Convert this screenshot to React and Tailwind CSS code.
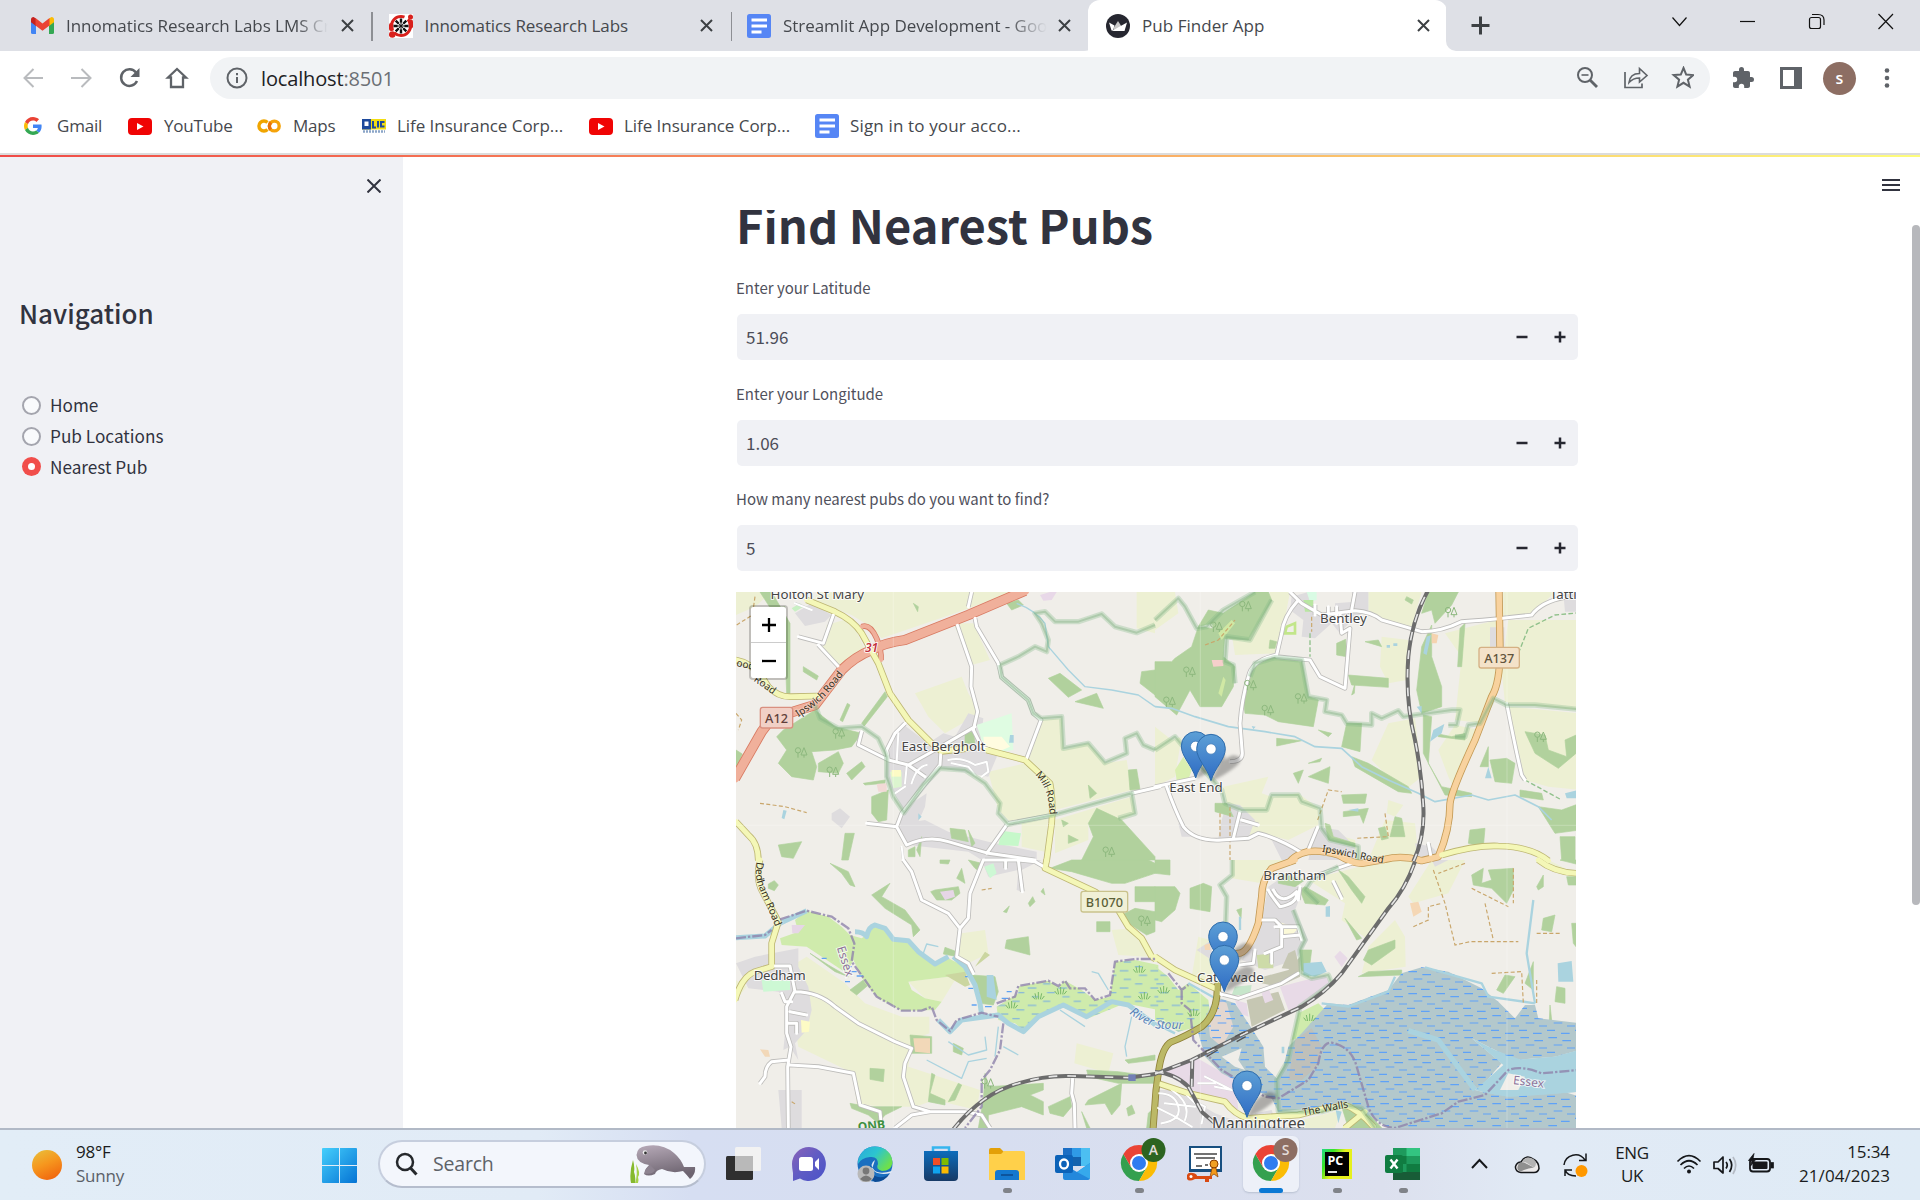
import React from "react";

const UI = "font-['Open_Sans','Noto_Sans',sans-serif]";
const SRC = "font-['Noto_Sans_CJK_SC','Noto_Sans',sans-serif]";

/* ---------- favicons ---------- */
const GmailIcon = () => (
  <svg className="h-[17px] w-[23px]" viewBox="0 0 23 17">
    <path d="M0 2.5V15.5Q0 17 1.5 17H5V6Z" fill="#4285f4" />
    <path d="M23 2.5V15.5Q23 17 21.500 17H18V6Z" fill="#34a853" />
    <path d="M0 2.500Q0 0 2.500 0L5 1.500V9L0 5.200Z" fill="#c5221f" />
    <path d="M23 2.500Q23 0 20.500 0L18 1.500V9L23 5.200Z" fill="#fbbc04" />
    <path d="M4.500 1L11.500 6.500L18.500 1V8.500L11.500 13.800L4.500 8.500Z" fill="#ea4335" />
  </svg>
);
const WheelIcon = () => (
  <svg className="h-6 w-6" viewBox="0 0 24 24">
    <rect width="24" height="24" fill="#fff" />
    <circle cx="12" cy="12" r="9.500" fill="none" stroke="#d8201c" strokeWidth="3" strokeDasharray="22 4" />
    <circle cx="3.200" cy="20.500" r="3.300" fill="#d8201c" />
    <circle cx="21.500" cy="3" r="2.500" fill="#d8201c" />
    <rect x="19" y="5.500" width="5" height="9" rx="2" fill="#d8201c" />
    <rect x="0" y="9" width="5" height="8" rx="2" fill="#d8201c" />
    <circle cx="12" cy="12" r="7.800" fill="#fff" />
    {[0, 45, 90, 135].map((a) => (
      <path key={a} d="M12 4.500V19.500" stroke="#111" strokeWidth="2.400" strokeDasharray="4 7" transform={`rotate(${a} 12 12)`} />
    ))}
    {[0, 45, 90, 135].map((a) => (
      <path key={a} d="M12 6V18" stroke="#111" strokeWidth="1" transform={`rotate(${a} 12 12)`} />
    ))}
  </svg>
);
const DocIcon = () => (
  <svg className="h-6 w-6" viewBox="0 0 24 24">
    <rect width="24" height="24" rx="2.500" fill="#5686f5" />
    <path d="M4.500 6H20M4.500 12H20M4.500 18H14.500" stroke="#fff" strokeWidth="2.800" />
  </svg>
);
const CrownIcon = () => (
  <svg className="h-6 w-6" viewBox="0 0 24 24">
    <circle cx="12" cy="12" r="12" fill="#262730" />
    <path d="M3 8.500L8.500 11.500L7 16.500H5.500Z" fill="#fff" />
    <path d="M12 7L7.500 14V17H16.500V14Z" fill="#c9c9c9" />
    <path d="M21 8.500L12 13.500L6 17H18.500Z" fill="#fff" />
  </svg>
);
const GoogleIcon = () => (
  <svg className="h-[18px] w-[18px]" viewBox="0 0 48 48">
    <path fill="#EA4335" d="M24 9.500c3.540 0 6.710 1.220 9.210 3.600l6.850-6.850C35.900 2.380 30.470 0 24 0 14.620 0 6.510 5.380 2.560 13.220l7.980 6.190C12.430 13.720 17.740 9.500 24 9.500z" />
    <path fill="#4285F4" d="M46.980 24.550c0-1.570-.15-3.090-.38-4.550H24v9.020h12.940c-.58 2.960-2.260 5.480-4.780 7.180l7.730 6c4.510-4.180 7.090-10.360 7.090-17.650z" />
    <path fill="#FBBC05" d="M10.530 28.590c-.48-1.450-.76-2.990-.76-4.590s.27-3.140.76-4.590l-7.980-6.190C.92 16.460 0 20.120 0 24c0 3.880.92 7.540 2.560 10.780l7.970-6.190z" />
    <path fill="#34A853" d="M24 48c6.480 0 11.930-2.130 15.890-5.810l-7.730-6c-2.150 1.450-4.920 2.300-8.160 2.300-6.260 0-11.570-4.220-13.470-9.910l-7.980 6.190C6.510 42.620 14.620 48 24 48z" />
  </svg>
);
const YouTubeIcon = () => (
  <svg className="h-[17px] w-6" viewBox="0 0 24 17">
    <rect width="24" height="17" rx="4" fill="#f00404" />
    <path d="M9 5L15.500 8.500L9 12Z" fill="#fff" />
  </svg>
);
const ColabIcon = () => (
  <svg className="h-[14px] w-6" viewBox="0 0 24 14">
    <path d="M10.500 3.500A5 5 0 1 0 10.500 10.500" fill="none" stroke="#f0a500" strokeWidth="3.400" />
    <circle cx="17.300" cy="7" r="4.900" fill="none" stroke="#f5a30a" strokeWidth="3.400" />
    <path d="M13.800 10.500A5 5 0 0 1 13.800 3.500" fill="none" stroke="#e8710a" strokeWidth="3.400" />
  </svg>
);
const LicIcon = () => (
  <svg className="h-[15px] w-6" viewBox="0 0 24 15">
    <rect width="24" height="10.500" fill="#f2dd12" />
    <rect width="9" height="10.500" fill="#1e4a9c" />
    <path d="M2.500 2.500H6.500V7H2.500Z" fill="#fff" />
    <path d="M11 2V8.500H14M16 2V8.500M22.500 3H19V7.500H22.500" fill="none" stroke="#1e4a9c" strokeWidth="2" />
    <path d="M1 12.500H23" stroke="#8ba5c8" strokeWidth="2.500" strokeDasharray="2 1" />
  </svg>
);
const CloseX = () => (
  <svg className="h-[13px] w-[13px] shrink-0" viewBox="0 0 13 13">
    <path d="M1 1L12 12M12 1L1 12" stroke="#3c4043" strokeWidth="2" />
  </svg>
);

/* ---------- browser ---------- */
function TabStrip() {
  return (
    <div className="flex h-[51px] bg-[#dee0e6] text-[17px] text-[#45484d]">
      <div className="flex w-[371px] items-center pl-[31px]">
        <GmailIcon />
        <div className="ml-3 w-[262px] overflow-hidden whitespace-nowrap tracking-[-0.05px] [mask-image:linear-gradient(90deg,#000_88%,transparent)]">Innomatics Research Labs LMS Cr</div>
        <div className="ml-[13px]"><CloseX /></div>
      </div>
      <div className="mt-3 h-[29px] w-[1.500px] bg-[#8d8f94]" />
      <div className="flex w-[358px] items-center pl-[16px]">
        <WheelIcon />
        <div className="ml-3 w-[275px] whitespace-nowrap tracking-[-0.100px]">Innomatics Research Labs</div>
        <CloseX />
      </div>
      <div className="mt-3 h-[29px] w-[1.500px] bg-[#8d8f94]" />
      <div className="flex w-[348px] items-center pl-[15px]">
        <DocIcon />
        <div className="ml-3 w-[264px] overflow-hidden whitespace-nowrap tracking-[-0.050px] [mask-image:linear-gradient(90deg,#000_85%,transparent)]">Streamlit App Development - Goo</div>
        <div className="ml-[11px]"><CloseX /></div>
      </div>
      <div className="flex">
        <div className="h-[51px] w-[16px] bg-white"><div className="h-full w-[16px] rounded-br-[12px] bg-[#dee0e6]" /></div>
        <div className="-ml-[8px] flex w-[359px] items-center rounded-t-[12px] bg-white pl-[18px]">
          <CrownIcon />
          <div className="ml-3 w-[275px] whitespace-nowrap tracking-[0.050px]">Pub Finder App</div>
          <CloseX />
        </div>
        <div className="-ml-px h-[51px] w-[10px] bg-white"><div className="h-full w-[10px] rounded-bl-[12px] bg-[#dee0e6]" /></div>
      </div>
      <svg className="ml-[15px] mt-4 h-[19px] w-[19px]" viewBox="0 0 19 19"><path d="M9.500 0.500V18.500M0.500 9.500H18.500" stroke="#3c4043" strokeWidth="3" /></svg>
      <svg className="ml-auto mt-[13px] h-[17px] w-[222px]" viewBox="0 0 222 17" fill="none" stroke="#111" strokeWidth="1.200">
        <path d="M0.500 4.500L7.500 12.500L14.500 4.500" />
        <path d="M68 8.500H83" />
        <path d="M140 1.500H146Q152 1.500 152 7V12" />
        <rect x="137.500" y="4.500" width="11" height="11" rx="2" />
        <path d="M206.500 1L221 16M221 1L206.500 16" />
      </svg>
      <div className="w-[26px] shrink-0" />
    </div>
  );
}

function Toolbar() {
  return (
    <div className="flex h-[54px] items-center bg-white">
      <svg className="ml-[23px] h-6 w-[166px]" viewBox="0 0 166 24" fill="none" strokeWidth="2">
        <path d="M20 12H2M10.500 3L1.500 12L10.500 21" stroke="#b9bbbe" />
        <path d="M48 12H67M58.500 3L67.500 12L58.500 21" stroke="#b9bbbe" />
        <path d="M113 6.500A8.300 8.300 0 1 0 114 15" stroke="#5f6368" strokeWidth="2.500" />
        <path d="M116.500 2V11H107.500Z" fill="#5f6368" />
        <path d="M145 11.500L154 3L163 11.500H160V21H148V11.500Z" stroke="#5f6368" strokeWidth="2.300" />
      </svg>
      <div className="ml-[21px] flex h-[42px] w-[1500px] items-center rounded-full bg-[#f1f3f5] pl-4">
        <svg className="h-[22px] w-[22px]" viewBox="0 0 22 22" fill="none" stroke="#5f6368" strokeWidth="2"><circle cx="11" cy="11" r="9.500" /><path d="M11 10V16M11 6V8.200" /></svg>
        <div className="ml-[13px] whitespace-nowrap pt-px text-[20px] tracking-[-0.150px] text-[#202124]">localhost<span className="text-[#6b6f74]">:8501</span></div>
        <svg className="ml-auto mr-[16px] h-6 w-[118px]" viewBox="0 0 118 24" fill="none" stroke="#5f6368" strokeWidth="2">
          <circle cx="9" cy="9" r="7" /><path d="M14 14L21 21" strokeWidth="2.800" /><path d="M5.500 9H12.500" strokeWidth="1.600" />
          <path d="M49 6V21.500H66V17.500" strokeWidth="1.700" /><path d="M53 16.500Q54 7.500 63.500 7.500V2.500L71 9.500L63.500 16V12Q57 12 53 16.500Z" strokeWidth="1.600" />
          <path d="M107.500 2.500L110.200 9.100L117.300 9.600L111.900 14.200L113.600 21.100L107.500 17.300L101.400 21.100L103.100 14.200L97.700 9.600L104.800 9.100Z" transform="translate(0 -0.500)" />
        </svg>
      </div>
      <svg className="ml-[21px] h-6 w-6" viewBox="0 0 24 24"><path fill="#5f6368" d="M20.500 11H19V7c0-1.100-.9-2-2-2h-4V3.500a2.500 2.500 0 0 0-5 0V5H4c-1.100 0-2 .9-2 2v3.800h1.500a2.700 2.700 0 0 1 0 5.400H2V20c0 1.100.9 2 2 2h3.800v-1.500a2.700 2.700 0 0 1 5.400 0V22H17c1.100 0 2-.9 2-2v-4h1.500a2.500 2.500 0 0 0 0-5z" /></svg>
      <svg className="ml-[25px] h-[22px] w-[22px]" viewBox="0 0 22 22"><rect x="1.500" y="1.500" width="19" height="19" fill="#fff" stroke="#5f6368" strokeWidth="3" /><rect x="14" y="1" width="7" height="20" fill="#5f6368" /></svg>
      <div className="ml-[21px] flex h-[33px] w-[33px] items-center justify-center rounded-full bg-[#8d6e63] text-[16px] font-semibold text-white">s</div>
      <svg className="ml-[28px] h-5 w-[6px]" viewBox="0 0 6 20" fill="#5f6368"><circle cx="3" cy="2.500" r="2.300" /><circle cx="3" cy="10" r="2.300" /><circle cx="3" cy="17.500" r="2.300" /></svg>
    </div>
  );
}

function Bookmarks() {
  return (
    <div className="flex h-[50px] shrink-0 items-center whitespace-nowrap border-b-2 border-[#dcdcdc] bg-white pb-[6px] pl-6 text-[17px] tracking-[-0.200px] text-[#45484d]">
      <GoogleIcon /><div className="ml-[15px] w-[71px]">Gmail</div>
      <YouTubeIcon /><div className="ml-[12px] w-[93px]">YouTube</div>
      <ColabIcon /><div className="ml-[12px] w-[69px]">Maps</div>
      <LicIcon /><div className="ml-[11px] w-[192px] tracking-[-0.050px]">Life Insurance Corp...</div>
      <YouTubeIcon /><div className="ml-[11px] w-[191px] tracking-[-0.050px]">Life Insurance Corp...</div>
      <DocIcon /><div className="ml-[11px] tracking-[0.150px]">Sign in to your acco...</div>
    </div>
  );
}

/* ---------- map data, in thirds of a pixel per quarter sheet ---------- */
const ORIGIN = { a: "translate(0 0)", b: "translate(1260 0)", c: "translate(0 810)", d: "translate(1260 810)" };

const FARM = [
  ["a", "M250 6H835L660 70L440 145L390 100L350 75L235 30Z M275 105L345 85L400 200L320 230L262 180Z M540 310L680 260L700 310L735 370L630 430L580 380Z M655 100L715 100L765 210L710 225Z M1205 6H1260V130L1205 115Z M3 6H110L60 50L3 75Z"],
  ["a", "M915 390L980 385L985 480L1060 460L1110 520L1175 510L1190 600L960 660L950 580L875 505Z M760 545L870 520L945 600L945 680L830 700L790 660Z M860 700L940 685L930 785L860 770Z M960 690L1090 650L1190 620L1200 670L1160 690L1060 700L1060 750L960 790Z"],
  ["b", "M0 6H60L70 70L0 120Z M345 6H405L370 190L240 195L225 100L320 70Z M640 6H800L770 110L680 90L640 60Z M680 140L760 150L755 270L700 280L675 230Z M1060 90H1275V360L1050 340L1040 240Z M1045 6H1200L1130 75L1045 85Z M870 130L1025 90L1020 310L985 400L900 390L920 200Z M0 410L50 450L80 440L60 560L0 590Z M205 590L340 560L320 610L350 620L430 610L490 655V705L400 750L300 725L215 640Z M700 400L780 385L800 560L750 600L700 560L650 510Z M700 630L745 645L720 680L695 670Z M900 405L975 420L900 600L880 560L850 480Z M1060 350L1275 370V600L1180 590L1110 570Z M230 700L310 710L290 750L230 745Z M640 810L690 690L780 700L790 800Z M500 720L600 750L610 810H480Z"],
  ["c", "M150 330L215 290L330 370L390 430L500 470L583 470L583 520L530 540L520 620L735 690L725 750L600 720L540 740H480L365 735L355 640L190 560Z M680 220L750 210L760 280L700 310L670 290Z M1130 210L1200 205L1235 240L1235 290L1150 285Z M1025 550L1135 580L1120 640L1018 610Z M3 360L35 380L3 420Z M520 365L640 350L660 360L620 425L570 415Z"],
  ["d", "M230 0H420L330 40L320 70L230 55Z M460 60L690 0H780L730 100L640 240L560 180L570 130Z M720 180L750 230L752 320L620 340L640 260Z M830 0H930L880 100L775 130L760 110Z M130 230L165 240L175 370L110 350Z M970 0H1160L1260 60V40L1180 0Z M440 780L560 750L540 804H440Z"],
];
const URBAN = [
  ["a", "M500 400L580 460L625 430L660 440L700 370L745 385L735 470L790 490L760 560L620 535L510 670L450 560L455 500Z M510 700L570 690L640 725L760 755L905 785V810H740L700 785L520 765L490 710Z M500 660L575 610L570 650L530 740L490 700Z M180 70L230 40L290 75L270 95L210 108Z M290 670L315 655L345 680L320 715L290 690Z"],
  ["b", "M410 20L460 6L480 60L540 80V40L600 35L590 6H640V60L590 90L555 130L530 100L480 145L440 140L445 90L405 60Z M1005 112L1048 112V170H1005Z M1225 10H1275V65H1230Z M215 640L255 645L300 690L280 745H190L200 690Z M70 700L120 740H80Z M485 710L550 720L600 770V810H460Z M350 750L420 775L430 810H380Z M780 760L830 770L860 800L790 800Z"],
  ["c", "M3 310L60 290L190 265V320L220 380L230 450L215 510L180 550L190 600L165 560L145 570L160 420L130 395L40 385Z M740 0H920L860 30V95L845 90L850 30L760 50Z M130 690L200 690V804H140Z"],
  ["d", "M340 80L400 40L440 100L420 150L460 240L420 300L330 330L260 300L320 180Z M125 270L170 240V300Z M0 690L60 690L180 760L260 790L440 804H0Z M300 760L350 750L360 780L290 790Z M830 0H880L840 20Z"],
];
const WOOD = [
  ["a", "M145 420L240 360L300 410L380 430L350 470L300 480L230 485L245 530L235 570L170 560L130 520L155 480L125 440Z M250 520L310 485L325 520L310 550L250 545Z M380 400L450 305L457 320L388 408Z M940 265L975 250L1040 300L1000 322Z M1020 335L1085 310L1105 355Z M1220 245L1260 240V315L1215 280Z M1085 655L1160 690L1260 800V810H1040L1075 740L1060 700Z M1180 540L1205 538L1215 598L1185 600Z M330 730H358L340 810H320Z M130 765L200 755L175 805L140 800Z M410 620L460 600L455 690L430 695L410 670Z M205 230L250 258L245 270L205 245Z M315 390L337 340L345 345L323 395Z"],
  ["a", "M3 480L22 492L3 540Z M1060 585L1085 610L1065 625Z M75 6H110L165 100V310H155L148 120Z M90 60L150 50L150 90L90 120Z M335 550L380 515L390 530L350 570Z M385 580L450 570L450 580L390 585Z M690 430L715 425L720 460L690 460Z M815 40L850 30L865 45L830 60Z M645 715L690 720L700 755L650 745Z M700 720L720 760L710 770Z M545 780L560 740L555 800Z M520 780L540 770V800H520Z M980 690L1000 700L985 710Z M535 40L550 50L548 65Z M1000 735L1030 750L1000 760Z"],
  ["b", "M205 70L300 6H340L350 30L280 150L190 145L170 100L130 110L160 60Z M0 215L50 215L60 205L110 170L130 110L210 120L205 200L240 230L235 290L200 350H135L105 300L65 375L0 320Z M290 230L360 200L440 215L460 320L490 330L475 410L370 395L330 375L270 370L265 330Z M820 6H910L890 45L840 100L830 60L800 70Z M800 170L830 105L830 200L860 290L860 350L800 370L785 300Z M580 255L700 265L700 292L590 285Z M575 400H620L615 485L560 470Z M590 500L640 520L760 590L770 610L730 605L600 530Z M460 560L525 530L520 580Z M365 445L440 452L365 468Z M560 615L635 612L630 640L565 640Z M565 665L640 655L625 700L615 675L565 680Z M545 160L572 148L575 200L545 195Z"],
  ["b", "M180 640L215 640L235 680L180 665Z M415 550L445 540L430 580Z M630 155L670 150L680 170Z M915 115L930 100L920 230H908Z M805 375L830 380L820 520L860 590L950 610V620L870 615L805 490Z M975 530L1000 470L1000 530Z M1005 510L1055 505L1080 520L1070 580L1020 575Z M1110 425L1170 435L1180 480L1235 500L1230 450L1275 430V480L1210 535L1140 490Z M1150 650L1220 660L1275 640V720L1200 730Z M940 760L945 720L990 715L985 770Z M720 680L740 685L750 740L705 740Z M670 715L690 710L700 745L680 750Z M1215 740L1260 740V810H1220Z M1095 600L1160 610L1165 630L1095 620Z M600 280L590 315L598 310Z M345 150L365 155L360 175L342 175Z M510 700L525 705L535 740L600 760L600 770L520 750Z M490 420L530 430L520 440Z M460 520L500 505L495 515Z M755 20L775 30L770 42L750 30Z M840 430L890 440L930 430V450L850 440Z"],
  ["c", "M285 10L340 35L360 80L345 75L320 40Z M410 105L465 70L440 110L510 150L555 210L535 230L530 195L450 145Z M587 95L600 90L670 80L675 100L650 120L605 120Z M680 25L690 70L665 55Z M945 25L1010 0H1240L1260 10V40L1170 70L1130 70L1010 35Z M1200 80H1260V125H1200Z M1160 165L1200 145L1260 155V215L1235 225L1165 180Z M1085 185H1125V215H1085Z M815 240L880 230L885 285L810 265Z M710 345L780 350L790 395L775 435L735 430Z M345 390L385 360L400 375L365 405Z M405 625L448 628L445 665L405 658Z M750 640L760 680L925 670V690L885 705L925 725V765L860 740L760 765L760 804H730L745 720Z"],
  ["c", "M345 730L400 740L500 740L450 765L430 790L400 765L350 745Z M590 640L600 645L585 700L630 720V735L580 725Z M680 675L660 720L640 725L670 670Z M655 550L685 565L680 585L655 575Z M1060 720L1160 670L1155 735L1130 765L1110 730L1050 735Z M940 740L1005 710L1010 740L985 770L945 760Z M1175 745L1190 735L1200 760L1180 768Z M1240 760L1250 750V804H1235Z M1170 600L1260 585V600L1180 610Z M1055 630L1150 635L1260 650V670H1150L1060 650Z M100 72L118 62L130 75L118 92L100 85Z M880 130L893 110L900 125L885 140Z M925 85L930 105L918 95Z M630 262L665 275L668 290L625 282Z M805 155L823 138L815 158Z M525 525L590 530L590 580L530 580Z M225 280L280 315L340 350L300 335Z M615 0H645L640 12L615 10Z M1040 755L1065 804H1055Z M700 0L740 10L735 35L720 25Z"],
  ["d", "M0 0H45V45L0 40Z M0 80H60L75 100L60 150L20 185L0 180Z M105 85L145 70L170 80L165 155L105 145Z M370 40L450 60L420 80L370 70Z M435 90L450 80L520 120L510 135L450 130Z M550 30L580 50L630 110L620 130L590 90Z M570 175L620 235L605 240Z M640 270L720 240L720 265L650 315L625 300Z M640 335L740 330L740 345L610 350Z M950 45L985 25L980 70L1010 60L1000 30L1075 25V90L1055 130L1010 85L955 75Z M1145 80L1165 45L1165 80L1150 90Z M1165 175L1200 165L1190 215L1160 210Z M1205 380L1230 385L1230 430L1200 425Z M1135 305V390L1110 370Z M1025 390L1050 345L1080 350L1045 400Z M1235 50H1275V75H1240Z M1185 435L1190 480H1183Z M245 150L260 145L258 175Z M1250 190H1275V275L1255 250Z M435 270L470 270L460 350L440 330Z M560 740L640 760L680 804H580Z M1215 0H1275V15Z"],
];
const WET = [
  ["c", "M180 180L215 152L280 170L320 200L345 225L380 235L395 225L410 200L440 200L465 235L520 250L560 290L600 310L640 295L690 320L700 345L640 350L520 365L530 390L570 415L620 425L600 450L500 452L430 415L390 370L355 300L335 340L215 260L140 255L135 235L190 215Z"],
  ["c", "M785 440L850 400L850 380L940 362L970 380L990 362L1040 390L1080 420L1125 410L1140 305L1200 300L1270 315V450L1170 430L1060 475L980 440L910 470L870 515L840 490L790 480Z"],
  ["d", "M0 318L40 350L70 390L100 370L160 420L165 460L130 500L70 515L0 480Z M430 460L490 430L520 460L515 500L450 530L410 540Z"],
];
const TIDAL = "M130 520L180 410L240 430L290 505L325 560L330 620L365 655L385 620L400 560L440 520L520 430L580 435L700 390L740 340L800 322L880 335L980 385L1030 425L1080 475L1110 435L1140 435L1150 475L1275 490V570L1200 590L1080 600L950 535L1040 610L970 690L870 580L760 510L850 540L960 690L1000 700L1080 650L1275 710V804H880L700 804L650 770L560 735L370 755L350 715L200 640L150 590Z";

const ROADS = [
  ["a", "white", "M710 6L700 50 M665 100L710 230L708 290L728 365L715 420L740 470L770 482 M720 85L725 110L790 220L800 262L880 330L895 370L918 390L875 505 M460 510L455 480L480 430L510 400 M720 410L600 480L520 525L460 510 M618 480L615 525L500 670L485 710L515 765Q580 735 640 755L760 790L900 810 M815 705L755 790 M955 675L820 700 M1190 610L1275 590 M295 75L265 160L190 140M250 165L320 240 M520 525L570 560 M395 700L485 710 M460 510L370 465L380 425"],
  ["a", "thin", "M485 515L490 430 M510 580L515 530 M530 580Q545 530 575 525 M480 610L510 590 M640 510Q680 500 720 525L755 515L760 545L740 560 M650 520L700 530L720 555 M180 40L230 60 M505 810L500 770"],
  ["b", "white", "M405 6L440 40L500 75L600 62Q650 65 680 90L800 125Q860 125 920 95Q1000 90 1130 75Q1160 35 1230 22 M430 30Q385 80 380 130L365 195Q290 210 280 260Q260 330 255 400L262 490Q262 515 225 515 M600 6L590 60 M555 70L560 130L585 115L570 295L495 260L465 210L365 200 M0 590L120 565 M35 590Q60 660 85 710Q120 755 200 750L280 745L310 730Q370 745 435 785 M255 665L235 745 M260 690L310 705 M488 712L460 780 M1055 340Q1080 470 1100 555L1110 570 M480 45V75M520 50V75M545 50V100 M820 760L830 810"],
  ["c", "white", "M505 0L530 35L560 120L640 160L675 205L700 175L705 100L745 0 M675 205L665 290L700 310L715 340 M750 0H850L900 5L935 25 M850 0L862 95 M115 318L165 318L180 395Q250 395 300 440L370 490L480 545L530 565L510 610L505 650L535 740L585 755L690 755L740 765L765 804 M585 755L530 765L480 804 M178 395L155 440L155 520L168 560L158 620L160 804 M165 615L250 620L355 640L375 735L435 755L440 804 M160 600L110 605Q90 620 90 650L75 670 M165 455L215 465M160 490L185 490L185 520 M1013 655L1010 700L1018 730L1020 804 M140 400L150 425H170 M812 0V25"],
  ["d", "white", "M190 400L250 415L380 370L430 340 M185 390L200 405 M535 65L560 115 M460 55L590 10 M300 270L295 310L255 315 M315 180L360 180L380 200L380 260L330 280 M355 90Q380 140 425 95Q430 130 375 140Q350 110 340 90 M435 80L430 120 M360 200H430L440 240 M380 230L435 225 M350 310V275"],
  ["d", "thin", "M10 700Q60 700 70 740T20 790 M0 740L60 770L110 800 M50 690Q110 730 90 780 M110 720L150 740L140 790 M150 650L230 690L180 680 M130 670H180 M90 700L150 760 M30 730L120 740"],
  ["a", "trunk", "M0 565L80 425L110 385L240 345L320 240Q360 200 410 180Q450 158 510 150L700 75L870 2"],
  ["a", "link", "M380 110Q405 100 425 145Q440 180 438 210"],
  ["a", "yellow", "M215 30L300 65Q355 90 380 130L430 220L465 310L520 390L590 460L620 484L700 475 M755 480L870 510L945 580Q955 630 950 700L935 812 M3 210Q60 220 100 290Q130 322 170 320L250 318 M3 695L40 735Q70 760 70 812"],
  ["b", "primary", "M1032 0L1035 180Q1035 280 1010 320L960 450Q890 600 885 640Q885 720 850 800L800 812Q740 795 690 808L620 820Q590 820 550 795Q480 775 440 790Q415 800 405 815"],
  ["b", "yellow", "M860 795Q960 765 1030 768Q1130 770 1180 812"],
  ["c", "yellow", "M75 0Q60 60 85 100L130 185L110 250L110 320L60 335Q20 350 0 420 M935 0L930 25L1080 95L1150 150L1180 200L1220 235L1250 290L1262 298"],
  ["d", "yellow", "M0 290L60 330L180 385 M1150 0Q1200 40 1275 40 M15 672L100 700L210 725Q240 765 280 775L430 765Q500 745 570 735Q610 750 655 800 M630 755L570 804"],
  ["d", "primary", "M420 0L350 25Q320 60 320 110L310 190Q280 280 250 280L215 290L190 340"],
  ["d", "olive", "M187 370Q190 460 140 500Q90 530 50 545Q20 560 10 640L3 690L-6 810"],
];
const STYLE = {
  white: ["#bdbcba", 14, "#ffffff", 9],
  thin: ["#cfcfcf", 8, "#ffffff", 6],
  trunk: ["#d87a62", 31, "#f0b09b", 26],
  link: ["#d87a62", 17, "#f0b09b", 12],
  primary: ["#c39a55", 22, "#f8d29e", 17],
  yellow: ["#bdb673", 20, "#f4f7b7", 15],
  olive: ["#8f8138", 21, "#bcb966", 16],
};
const GREENLINE = [
  ["a", "M240 345L255 385L310 415L380 410L430 445L455 500L455 560L475 620L507 668L565 585L615 535L690 540L750 580L795 640L790 670L820 703L955 675L1190 610L1200 670L1150 685M795 225L850 200L900 170L935 185L940 150L920 100L900 70L930 65L960 95L1030 95L1100 72L1140 110L1205 128L1260 105 M795 225L800 262L880 330L895 370L918 385L980 380L985 475L1060 460L1110 518L1175 490L1170 445L1205 430L1225 465L1260 480"],
  ["b", "M0 90L70 25L90 50L125 115L155 110L205 60L300 6 M0 480L60 440L110 500L200 600L210 640L260 660L335 660L350 615L430 615L440 635L495 655L500 715L525 750L610 770V810 M240 280L235 225L210 215L215 140L285 150L350 30 M285 260L300 220L360 203L440 210L460 320L515 330L510 365L560 375L575 400L650 405L650 370L680 385L730 362L745 380L890 360L915 360L905 405H880 M900 440L930 440L940 405L975 400L1015 325L1055 345L1140 345L1270 358"],
  ["d", "M232 0V45L195 75L215 110L210 240 M550 20L470 60L450 90L490 130 M415 150L450 240L435 270L440 340L470 355L520 345L530 370L435 440L400 600L365 660L370 755L500 755L570 735L620 745L660 804"],
];
const WATERLINES = [
  ["a", "M845 40Q900 60 930 100L940 170L1000 240L1050 290L1130 300L1210 315L1260 350", 4],
  ["b", "M0 350L50 355L120 380L220 410L330 425L420 440L480 470L560 475L620 530L700 570L790 610L840 635L950 615L1000 630L1080 615L1150 650L1190 690", 5],
  ["c", "M3 233L90 228L135 190L215 152 M360 215Q385 215 395 230Q400 200 420 195L450 205L475 238L520 242L550 275L600 312L640 290 M655 290L690 320L720 375L735 430L740 465 M610 480L645 515L680 480L790 465L820 490L865 515L910 470L985 435L1055 470L1130 425L1180 435L1262 495", 15],
  ["c", "M565 280L575 252L610 260M750 530L755 570L700 585L640 545 M575 600L680 655L700 605L755 595 M805 560L850 585 M1190 470L1170 560L1175 590 M1070 335L1090 340L1120 390 M975 450L1050 500 M790 500L780 590", 4],
  ["d", "M0 490L60 520M100 370L190 420 M500 430L580 440L700 395L720 350 M255 170V210 M1135 120L1115 280L1140 430 M810 322L980 370L1000 410L1140 430", 7],
  ["d", "M760 512L850 540L960 690", 16],
];
const ADMIN = [
  ["c", "M3 235L90 225L110 210 M135 178L215 152L290 170L340 205L358 250L350 305L390 360L425 410L500 452H560L590 440L605 480L645 513L665 480L740 458L790 470 M785 430L840 410L850 378L940 362L970 378L990 362L1005 385L1050 385L1080 420L1125 405L1140 305L1200 297H1262"],
  ["c", "M805 490L795 570L765 630L740 660L740 740L690 804"],
  ["d", "M40 340L80 390L100 375M80 390V430L105 450L115 540L200 630L330 710L370 715L460 660L490 610Q500 545 530 548Q590 560 605 620L640 740Q660 800 720 804L860 760L910 725L990 705L1060 630Q1100 615 1160 640L1270 630"],
];
const RAIL = [
  ["b", "M775 815Q810 740 805 650Q800 550 780 450Q750 330 760 200Q770 90 820 0"],
  ["c", "M655 808Q740 700 850 670Q930 645 1010 648L1180 653L1262 642"],
  ["d", "M0 642L110 600L270 520L440 440Q510 400 560 340L700 145Q750 90 780 5 M0 636Q60 640 100 680L140 755L180 790 M112 600L110 680"],
];
const PATHS = [
  ["b", "M470 80V125M195 670V750M225 650V810M488 690L520 600L560 605M690 670L700 740L600 745M150 165L190 150L240 90"],
  ["c", "M740 90L770 85M80 580M170 725L185 735"],
  ["d", "M835 30L870 130L900 255L945 245H1090M930 10L850 40M950 85L1060 140M990 130L1015 240M775 200L820 180V140L860 130M1075 25V130M1145 220H1220M1010 340L1100 335L1105 430M1145 360V430"],
  ["a", "M75 640L150 650L215 668M5 105L60 70M60 20L50 90M3 370L20 390L10 420"],
];
const DASHES_C = "M260 295H275M345 335H365M330 365H345M365 348H385M340 320H350M690 350H705M700 385H715M720 400H735M710 435H725M750 440H770M800 415H820M815 395H830";

function Tree({ x, y }) {
  return <g transform={`translate(${x} ${y})`} fill="none" stroke="#8db87e" strokeWidth="3"><circle cx="-8" cy="-6" r="8" /><path d="M-8 2V16M10 -14L1 8H19ZM10 8V16" /></g>;
}
function Marker({ x, y }) {
  return (
    <g transform={`translate(${x} ${y})`}>
      <path d="M2 0Q15 -60 65 -78Q105 -75 75 -45Q45 -20 2 0Z" fill="#333" opacity="0.35" filter="url(#soft)" />
      <path d="M0 -2C-12 -42 -43 -66 -43 -98A43 43 0 0 1 43 -98C43 -66 12 -42 0 -2Z" fill="url(#pin)" stroke="#2f6cab" strokeWidth="3" />
      <circle cx="0" cy="-97" r="15.500" fill="#fff" stroke="#3772b0" strokeWidth="2" />
    </g>
  );
}
const each = (list, fn) => list.map((p, i) => <g key={i} transform={ORIGIN[p[0]]}>{fn(p)}</g>);

function MapSheet() {
  const halo = { stroke: "#ffffff", strokeOpacity: 0.8, strokeWidth: 6, paintOrder: "stroke", strokeLinejoin: "round" };
  return (
    <svg className="block h-[536px] w-[840px] font-['Noto_Sans',sans-serif]" viewBox="3 6 2520 1608">
      <defs>
        <linearGradient id="pin" x1="0" y1="0" x2="0" y2="1"><stop offset="0" stopColor="#5c9fd6" /><stop offset="1" stopColor="#2f6cc4" /></linearGradient>
        <filter id="soft"><feGaussianBlur stdDeviation="5" /></filter>
        <pattern id="tide" width="84" height="66" patternUnits="userSpaceOnUse">
          <path d="M4 5H30M46 14H72M20 27H46M60 36H84M0 49H24M42 58H68" stroke="#5fa2f7" strokeWidth="3.500" />
        </pattern>
        <pattern id="marsh" width="92" height="52" patternUnits="userSpaceOnUse">
          <path d="M4 8H26M50 20H76M16 34H40M62 46H84" stroke="#6fa8e8" strokeWidth="3" />
        </pattern>
        <path id="ips1" d="M190 382Q240 350 275 315L340 235" />
        <path id="mill" d="M900 555Q945 595 945 690" />
        <path id="ded" d="M66 5Q55 50 78 98L130 220" />
        <path id="ips2" d="M500 785Q580 800 640 812L740 830" />
        <path id="stour" d="M1182 460Q1230 495 1270 506L1400 508" />
        <path id="walls" d="M445 768L590 740" />
        <path id="wood" d="M55 272L140 332" />
      </defs>
      <rect width="2540" height="1640" fill="#f0eee9" />
      {each(FARM, (p) => <path d={p[1]} fill="#edf0d3" />)}
      {each(URBAN, (p) => <path d={p[1]} fill="#dedcde" />)}
      {each(WOOD, (p) => <path d={p[1]} fill="#b1d19d" stroke="#b1d19d" strokeWidth="2" strokeLinejoin="round" />)}
      {each(WET, (p) => <path d={p[1]} fill="#cfebac" />)}
      <g transform={ORIGIN.a}>
        <path d="M725 405L830 370L835 480L780 490L740 450Z" fill="#dffce2" />
        <path d="M745 440H800L825 470L790 485H750Z" fill="#fffce0" />
        <path d="M800 722L858 730L850 768L790 765Z" fill="#c6f8ca" />
        <path d="M465 545H500V590L475 595Z" fill="#dcf5cf" /><path d="M470 540H498V560H470Z" fill="#fdfbc5" />
        <path d="M425 582L455 580V605H430Z" fill="#f2d9d6" />
        <path d="M915 15L945 6H965L950 30L925 32Z" fill="#e8d8e8" />
        <path d="M145 660L155 662L148 688L140 684Z M550 670L560 680L550 690Z M825 435H836V458H822Z" fill="#aad3df" />
        <path d="M170 55L195 40L205 50L180 65Z" fill="#c9f0c4" />
      </g>
      <g transform={ORIGIN.b}>
        <path d="M455 6H485V30L465 35Z" fill="#d9fbe4" /><path d="M445 30H475V65H450Z" fill="#b8e6a2" />
        <path d="M395 110L420 100V130H390Z" fill="none" stroke="#c2e68a" strokeWidth="8" />
        <path d="M170 210H205V228L175 230Z" fill="#f5cfcb" />
        <path d="M830 130L850 135L845 160L830 160Z" fill="#f5d3b0" /><path d="M805 190L815 140L828 135L815 195Z M825 455L835 420L868 402L860 430Z M1000 530L990 565H1010Z M785 350L800 348V370ZM695 165h10v8h-10ZM715 160h12v8h-12ZM580 660L610 655V665ZM1230 610L1270 600V625H1235Z M290 408L302 410L295 418Z" fill="#aad3df" />
        <path d="M190 130L230 90L240 100L200 150Z M190 310L205 260L212 270L200 320Z" fill="#d0e8a4" />
        <path d="M60 540L85 500L110 540L100 570H65Z" fill="#d9efb0" />
      </g>
      <g transform={ORIGIN.c}>
        <path d="M80 360L165 362V390L85 395Z M748 20L775 10L785 40L765 55Z" fill="#cdf8d4" />
        <path d="M170 195H210L190 220H172Z M615 95L655 90L660 110L630 120Z" fill="#e6d6e6" />
        <path d="M535 535H585V580L540 575Z M75 568L100 570L105 590L90 590Z" fill="#f2d8b8" />
        <path d="M198 480L225 485L222 515L200 518Z" fill="#fdfbc5" />
        <path d="M755 345H775L785 420L755 410Z" fill="#aad3df" /><path d="M630 345L690 335L705 375L690 380Z M750 275L765 285L720 320Z" fill="#cbd6a0" />
        <path d="M785 440L850 400L850 380L940 362L970 380L990 362L1040 390L1080 420L1125 410L1140 305L1200 300L1270 315V450L1170 430L1060 475L980 440L910 470L870 515L840 490L790 480Z" fill="url(#marsh)" />
        <path d={DASHES_C} stroke="#5fa2f2" strokeWidth="4" />
      </g>
      <g transform={ORIGIN.d}>
        <path d="M325 350L400 330L435 290L435 350L370 380L320 370Z M400 280L420 270L435 330L380 325Z M275 420L370 395L390 450L290 500Z" fill="#c6c7b3" />
        <path d="M375 380L510 345L525 370L430 445L400 450Z M240 420L275 430L280 470L255 460Z M320 400L340 385L355 420L330 430Z M538 290L555 272L578 295L560 322Z M20 630L120 590L240 660L250 750L180 720L90 680Z" fill="#e8dae7" />
        <path d="M305 285L355 280V325L310 325Z" fill="#cddba8" /><path d="M370 185L430 205L405 232L375 230Z" fill="#fbf9d8" />
        <path d="M0 318L40 350L70 390L100 370L160 420L165 460L130 500L70 515L0 480Z" fill="url(#marsh)" />
        <path d={TIDAL} fill="#b3c8cc" />
        <path d="M160 480L180 410L215 430L235 500L200 560L165 530Z" fill="#e3d7d0" />
        <path d="M420 540L470 505L500 560L485 620L440 660L400 660Z" fill="#bfc0ba" />
        <path d="M1275 570L1200 590L1100 600L1020 570L950 535L1045 615L960 690L1000 700L1060 710L1150 705L1275 695Z" fill="#aad3df" />
        <path d={TIDAL} fill="url(#tide)" />
        <path d="M1275 570L1200 590L1080 600L1030 630L970 690L1000 700L1060 710L1150 705L1275 695Z" fill="#aad3df" />
        <path d="M1035 690L1060 640L1110 650L1090 690Z" fill="#f0eee9" />
        <path d="M200 590L235 575L260 565L250 600L270 630L240 620Z" fill="#f0eee9" />
        <path d="M445 310L500 305L515 335L480 350L445 345Z M1208 310L1250 303L1255 365H1210Z M512 140L525 138L525 170H512Z M380 560H388V580H380Z M542 750L560 755L550 790Z" fill="#aad3df" />
        <path d="M765 130L790 125L800 155L775 170Z M148 255L165 250V270H150Z" fill="#f5d7b5" />
        <path d="M240 380L290 375L285 405H230Z" fill="#c7e6cb" />
      </g>
      {each(WATERLINES, (p) => <path d={p[1]} fill="none" stroke="#aad3df" strokeWidth={p[2]} strokeLinejoin="round" />)}
      {each(PATHS, (p) => <path d={p[1]} fill="none" stroke="#c9a66b" strokeWidth="3.500" strokeDasharray="12 7" />)}
      <g transform={ORIGIN.b} fill="none" stroke="#8fc08a" strokeWidth="4" strokeDasharray="14 7"><path d="M1275 68L1200 75L1120 115L1090 190 M1110 570L1220 630 M465 130V200" /></g>
      {each(ROADS, (p) => <path d={p[2]} fill="none" stroke={STYLE[p[1]][0]} strokeWidth={STYLE[p[1]][1]} strokeLinejoin="round" />)}
      {each(ROADS, (p) => <path d={p[2]} fill="none" stroke={STYLE[p[1]][2]} strokeWidth={STYLE[p[1]][3]} strokeLinejoin="round" strokeLinecap="round" />)}
      {each(GREENLINE, (p) => <g fill="none" strokeLinejoin="round"><path d={p[1]} stroke="#7fb585" strokeOpacity="0.3" strokeWidth="16" /><path d={p[1]} stroke="#7fb07f" strokeOpacity="0.4" strokeWidth="6" /></g>)}
      {each(ADMIN, (p) => <path d={p[1]} fill="none" stroke="#8f83ab" strokeWidth="7" strokeOpacity="0.8" strokeDasharray="30 6 7 6" />)}
      {each(RAIL, (p) => <g fill="none"><path d={p[1]} stroke="#6c6c6c" strokeWidth="12" /><path d={p[1]} stroke="#e6e6e6" strokeWidth="5" strokeDasharray="26 30" /></g>)}
      <g transform={ORIGIN.d}><path d="M240 530L270 515M245 545L272 530M150 575L185 560M155 590L188 570" stroke="#555" strokeWidth="4" /></g>
      <g transform={ORIGIN.c}><rect x="1180" y="643" width="22" height="20" fill="#7380b5" /></g>
      <path d="M475 6V1614M1396 6V1614M2316 6V1614M0 706H2540" stroke="#fff" strokeWidth="1.500" opacity="0.45" />
      {[[197, 487], [310, 430], [292, 545], [1120, 785], [1362, 245], [1302, 335], [1530, 48], [1443, 110], [1545, 285], [1597, 360], [1697, 325], [2415, 440], [2147, 66], [1227, 992], [757, 1480]].map((t, i) => <Tree key={i} x={t[0]} y={t[1]} />)}
      {[[830, 1245], [910, 1218], [977, 1203], [1213, 1138], [1228, 1218], [1286, 1200], [1376, 1268], [1724, 1283]].map((t, i) => (
        <path key={i} d={`M${t[0]} ${t[1] + 10}V${t[1] - 12}M${t[0] - 6} ${t[1] + 10}L${t[0] - 10} ${t[1] - 8}M${t[0] + 6} ${t[1] + 10}L${t[0] + 10} ${t[1] - 8}M${t[0] - 10} ${t[1] + 10}L${t[0] - 18} ${t[1]}M${t[0] + 10} ${t[1] + 10}L${t[0] + 18} ${t[1]}`} stroke="#78b868" strokeWidth="3" />
      ))}
      <g fontSize="30" fill="#35311d" {...halo} strokeOpacity={0.3}>
        <text><textPath href="#ips1">Ipswich Road</textPath></text>
        <text><textPath href="#mill">Mill Road</textPath></text>
        <g transform={ORIGIN.c}><text fontSize="31"><textPath href="#ded">Dedham Road</textPath></text></g>
        <g transform={ORIGIN.b}><text fontSize="30"><textPath href="#ips2">Ipswich Road</textPath></text></g>
        <g transform={ORIGIN.d}><text fontSize="31"><textPath href="#walls">The Walls</textPath></text></g>
        <text><textPath href="#wood">Road</textPath></text>
        <text x="3" y="228" transform="rotate(12 3 228)">ood</text>
      </g>
      <text x="390" y="187" fontSize="36" fontStyle="italic" fill="#c0303a" fontWeight="600" stroke="#fff" strokeWidth="5" paintOrder="stroke">31</text>
      <g transform={ORIGIN.c} fill="#5a82b8" fontSize="36" fontStyle="italic" stroke="#fff" strokeOpacity="0.5" strokeWidth="5" paintOrder="stroke"><text><textPath href="#stour">River Stour</textPath></text></g>
      <g fill="#8d7399" fontSize="36" stroke="#fff" strokeOpacity="0.7" strokeWidth="6" paintOrder="stroke">
        <text transform="translate(305 1073) rotate(72)">Essex</text>
        <text transform="translate(2333 1482) rotate(7)">Essex</text>
      </g>
      <g fontSize="40" fill="#454545" textAnchor="middle" {...halo}>
        <text x="247" y="28">Holton St Mary</text>
        <text x="625" y="482">East Bergholt</text>
        <text x="1825" y="99">Bentley</text>
        <text x="2485" y="26">Tatti</text>
        <text x="1383" y="605">East End</text>
        <text x="134" y="1169" textLength="156">Dedham</text>
        <text x="1679" y="869">Brantham</text>
        <text x="1486" y="1176">Cattawade</text>
        <text x="1571" y="1616" fontSize="46">Manningtree</text>
      </g>
      <text x="370" y="1624" fontSize="36" fontWeight="700" fill="#3d9040" transform="rotate(-6 370 1624)">ONB</text>
      {[
        [76, 352, 97, "A12", "#f1d0c6", "#d99080", "#5f3f3a"],
        [2232, 172, 121, "A137", "#f4e2c9", "#d5b184", "#62543c"],
        [1038, 904, 140, "B1070", "#f0f0d6", "#c9c28c", "#5b6037"],
      ].map(([x, y, w, t, bg, bd, fg]) => (
        <g key={t}><rect x={x} y={y} width={w} height="62" rx="7" fill={bg} stroke={bd} strokeWidth="4" /><text x={x + w / 2} y={y + 46} fontSize="38" textAnchor="middle" fill={fg} fontWeight="500">{t}</text></g>
      ))}
      <Marker x={1382} y={566} /><Marker x={1428} y={574} />
      <Marker x={1464} y={1137} /><Marker x={1468} y={1207} /><Marker x={1536} y={1584} />
    </svg>
  );
}

/* ---------- page ---------- */
function NumberField({ label, value }) {
  return (
    <div className="mb-[24.500px]">
      <div className="flex h-[35px] items-start text-[15px] leading-[18px] text-[#50515c]">{label}</div>
      <div className="ml-px flex h-[46px] items-center justify-between rounded-[5px] bg-[#f0f1f5] pl-[9px] pr-[12px]">
        <span className="text-[17px] leading-[22px] text-[#4c4d58]">{value}</span>
        <svg className="h-3 w-[50px]" viewBox="0 0 50 12" stroke="#262730" strokeWidth="2.500"><path d="M0.500 6H11.500M38.500 6H49.500M44 0.500V11.500" /></svg>
      </div>
    </div>
  );
}

function Sidebar() {
  return (
    <aside className="h-full w-[403px] shrink-0 bg-[#f0f1f5] text-[#31333f]">
      <div className="flex h-[58px] justify-end pr-[22px] pt-[22px]">
        <svg className="h-[14px] w-[14px]" viewBox="0 0 14 14"><path d="M0.500 0.500L13.500 13.500M13.500 0.500L0.500 13.500" stroke="#31333f" strokeWidth="2" /></svg>
      </div>
      <h2 className="ml-[19px] mt-[80px] text-[26px] font-medium leading-[36px]">Navigation</h2>
      <div className="ml-[22px] mt-[59px] flex flex-col">
        {["Home", "Pub Locations", "Nearest Pub"].map((t, i) => (
          <label key={t} className="flex h-[30.700px] items-center text-[17.200px] leading-[24px]">
            <span className={i === 2 ? "flex h-[19px] w-[19px] items-center justify-center rounded-full bg-[#f14e4b]" : "h-[19px] w-[19px] rounded-full border-[2.500px] border-[#a4a5ae] bg-[#f9fafc]"}>
              {i === 2 && <span className="h-[7px] w-[7px] rounded-full bg-white" />}
            </span>
            <span className="ml-[9px]">{t}</span>
          </label>
        ))}
      </div>
    </aside>
  );
}

function Page() {
  return (
    <div className={`flex h-[971px] shrink-0 overflow-hidden bg-white ${SRC}`}>
      <Sidebar />
      <main className="ml-[333px] w-[842px] shrink-0 pt-[53px]">
        <div className="h-[55px] overflow-hidden">
          <h1 className="-mt-[18px] whitespace-nowrap text-[47px] font-bold leading-[64px] text-[#31333f]">Find Nearest Pubs</h1>
        </div>
        <div className="mt-[14px]">
          <NumberField label="Enter your Latitude" value="51.96" />
          <NumberField label="Enter your Longitude" value="1.06" />
          <NumberField label="How many nearest pubs do you want to find?" value="5" />
        </div>
        <div className="relative -mt-[3.500px]">
          <MapSheet />
          <div className="absolute left-[13px] top-[13px] flex h-[75px] w-[39px] flex-col rounded-[4px] border-2 border-black/20 bg-white bg-clip-padding">
            <div className="flex flex-1 items-center justify-center border-b border-[#ccc]"><svg className="h-[14px] w-[14px]" viewBox="0 0 14 14"><path d="M7 0V14M0 7H14" stroke="#000" strokeWidth="2.300" /></svg></div>
            <div className="flex flex-1 items-center justify-center"><svg className="h-[14px] w-[14px]" viewBox="0 0 14 14"><path d="M0 7H14" stroke="#000" strokeWidth="2.300" /></svg></div>
          </div>
        </div>
      </main>
      <div className="ml-auto flex w-[40px] flex-col items-end">
        <svg className="mr-5 mt-[22px] h-3 w-[18px]" viewBox="0 0 18 12"><path d="M0 1H18M0 6H18M0 11H18" stroke="#31333f" strokeWidth="2" /></svg>
        <div className="mt-[34px] h-[680px] w-[8px] rounded-full bg-[#b7b8bc]" />
      </div>
    </div>
  );
}

/* ---------- taskbar ---------- */
const Chrome = ({ letter, color }) => (
  <svg className="h-[46px] w-[50px] overflow-visible" viewBox="0 0 50 46">
    <g transform="translate(7 8)">
      <path d="M10.200 22.500L2.400 9A18 18 0 0 0 18 36L25.800 22.500Z" fill="#34a04f" />
      <path d="M18 9H33.600A18 18 0 0 1 18 36L25.800 22.500Z" fill="#fbbc05" />
      <path d="M2.400 9A18 18 0 0 1 33.600 9H18L10.200 22.500Z" fill="#ea4335" />
      <circle cx="18" cy="18" r="9" fill="#fff" /><circle cx="18" cy="18" r="7" fill="#2f7cf0" />
    </g>
    <circle cx="39.500" cy="13" r="12" fill={color} />
    <text x="39.500" y="18" fontSize="14" textAnchor="middle" fill="#e4ddda" fontWeight="600">{letter}</text>
  </svg>
);
const Icon = ({ children }) => <svg className="h-9 w-9" viewBox="0 0 36 36">{children}</svg>;
const TASKS = [
  { el: <Icon><rect x="1" y="10" width="27" height="24" rx="1.500" fill="#2f2f2f" /><rect x="10" y="1" width="26" height="24" rx="1.500" fill="#f2f2f2" /><rect x="10" y="10" width="18" height="15" fill="#b9b9b9" /></Icon> },
  { el: <Icon><defs><linearGradient id="chat" x1="0" y1="0" x2="1" y2="1"><stop offset="0" stopColor="#8a62b8" /><stop offset="0.500" stopColor="#5f5cc4" /><stop offset="1" stopColor="#4a52c8" /></linearGradient></defs><path d="M18 1A17 17 0 1 1 9 32.500L2 35V27Q1 22 1 18A17 17 0 0 1 18 1Z" fill="url(#chat)" /><rect x="8" y="11" width="14" height="14" rx="2.500" fill="#fff" /><path d="M24 16L28 12V24L24 20Z" fill="#fff" /></Icon> },
  { el: <Icon><defs><linearGradient id="edge" x1="0" y1="0" x2="1" y2="0.600"><stop offset="0" stopColor="#2aa8dc" /><stop offset="0.500" stopColor="#2cc5cf" /><stop offset="1" stopColor="#6fe04a" /></linearGradient></defs><circle cx="18" cy="18" r="17.500" fill="#1a6fc0" /><path d="M1 15Q4 1 18 0.500Q35 2 35.500 17Q34 25 25 25Q18 23 21 18Q21 10 13 11Q4 12 1 18Z" fill="url(#edge)" /><path d="M14 18Q11 28 21 31Q29 32 33 27Q28 36 18 36Q8 30 14 18Z" fill="#0c4c96" /><path d="M18 14Q12 18 17 24Q22 29 35 25L34 27Q20 30 15 23Z" fill="#e2eaf4" /><circle cx="9" cy="28" r="8.500" fill="#b9b9b9" /><circle cx="9" cy="25" r="3.400" fill="#777" /><path d="M3 33Q9 26 15 33Q9 38 3 33Z" fill="#777" /></Icon> },
  { el: <Icon><defs><linearGradient id="store" x1="0" y1="0" x2="0" y2="1"><stop offset="0" stopColor="#0d6cbb" /><stop offset="1" stopColor="#173a66" /></linearGradient></defs><path d="M10 6V1.500H26V6" fill="none" stroke="#36b5ee" strokeWidth="2.500" /><path d="M1 5H35V31Q35 35 31 35H5Q1 35 1 31Z" fill="url(#store)" /><path d="M10 12H17V19H10Z" fill="#f04e26" /><path d="M18.500 12H25.500V19H18.500Z" fill="#7fba00" /><path d="M10 20.500H17V27.500H10Z" fill="#10a4ef" /><path d="M18.500 20.500H25.500V27.500H18.500Z" fill="#fcb900" /></Icon> },
  { dot: 1, el: <Icon><path d="M0 4Q0 2 2 2H11L15 6H34V12H0Z" fill="#e3a008" /><path d="M0 8H12L15 5H34Q36 5 36 7V34H0Z" fill="#ffd04a" /><path d="M6 34V27Q6 24 9 24H27Q30 24 30 27V34Z" fill="#1378cf" /><path d="M12 29H24" stroke="#0d549c" strokeWidth="2" /></Icon> },
  { el: <Icon><rect x="8" y="2" width="27" height="18" fill="#1b6ec4" /><path d="M17 2H26V11H17Z" fill="#2f9ae6" /><path d="M26 2H35V11H26ZM26 11H35V20H26Z" fill="#4cbff2" /><path d="M17 11H26V20H17Z" fill="#1462ae" /><path d="M8 18L22 26L35 17V32Q35 34 33 34H10Q8 34 8 32Z" fill="#2388dc" /><path d="M35 17L22 26L35 33Z" fill="#36a9ec" /><rect x="0" y="9" width="18" height="18" rx="2" fill="#0c62b8" /><ellipse cx="9" cy="18" rx="4" ry="4.500" fill="none" stroke="#fff" strokeWidth="2.300" /></Icon> },
  { dot: 1, el: <Chrome letter="A" color="#2c6420" /> },
  { el: <Icon><rect x="2" y="0" width="33" height="26" fill="#174f80" /><rect x="4" y="2" width="29" height="21" fill="#fff" /><path d="M7 8H30M9 12H28M9 20H15M18 19H21" stroke="#444" strokeWidth="1.400" /><circle cx="27" cy="18" r="4" fill="#f0a024" stroke="#8b3d00" /><path d="M25 22L23 31L27 28L31 31L29 22Z" fill="#f39a1c" stroke="#8b3d00" strokeWidth="0.700" /><path d="M0 29Q1 26 6 27Q10 28 10 30H25V33H22V36H18V33H8Q2 36 0 33Z" fill="#d94a12" /><circle cx="4" cy="30.500" r="1.500" fill="#fff" /></Icon> },
  { active: 1, el: <Chrome letter="S" color="#8d6e63" /> },
  { dot: 1, el: <Icon><defs><linearGradient id="pyc" x1="0" y1="0" x2="1" y2="0.600"><stop offset="0" stopColor="#21d789" /><stop offset="0.300" stopColor="#37e326" /><stop offset="0.600" stopColor="#e5f01d" /></linearGradient></defs><rect x="3" y="3" width="30" height="30" fill="url(#pyc)" /><rect x="6" y="6" width="24" height="24" fill="#000" /><text x="8.500" y="18.500" fontSize="12.500" fontWeight="700" fill="#fff">PC</text><path d="M9 26H18" stroke="#fff" strokeWidth="1.800" /></Icon> },
  { dot: 1, el: <Icon><path d="M8 2H35V34H8Z" fill="#1e9a5c" /><path d="M21.500 2H35V10H21.500Z" fill="#33c481" /><path d="M8 10H21.500V18H8Z" fill="#107c41" /><path d="M21.500 18H35V26H21.500Z" fill="#107c41" /><path d="M8 26H35V34H8Z" fill="#185c37" /><rect x="0" y="9" width="18" height="18" rx="2" fill="#107c41" /><path d="M5.500 13.500L12.500 22.500M12.500 13.500L5.500 22.500" stroke="#fff" strokeWidth="2.400" /></Icon> },
];

function Manatee() {
  return (
    <svg className="h-[38px] w-[66px]" viewBox="0 0 66 38">
      <defs><linearGradient id="man" x1="0" y1="0" x2="0.300" y2="1"><stop offset="0" stopColor="#b8abb9" /><stop offset="1" stopColor="#6d6470" /></linearGradient></defs>
      <path d="M1 38Q-1 28 3 15Q5 22 4 27Q6 32 5 38Z" fill="#86b92e" /><path d="M5 38Q8 30 6 19Q11 28 8 32Q9 35 8 38Z" fill="#a6d14a" />
      <path d="M6.500 10Q7 2 16 1Q32 -2 44 8Q51 14 54 22Q60 22 65 22Q66 29 60 34Q56 29 53 26Q42 29 32 24Q26 25 25 29Q18 32 14 29Q15 24 19 20Q7 18 6.500 10Z" fill="url(#man)" />
      <circle cx="15" cy="7.500" r="2.300" fill="#eee" /><circle cx="15.500" cy="8" r="1.400" fill="#333" />
      <path d="M20 20Q14 24 14.500 28.500Q22 30 25 25Z" fill="#8d8390" />
    </svg>
  );
}

function Taskbar() {
  return (
    <div className="flex h-[72px] shrink-0 items-center border-t-2 border-[#b1b9c6] bg-[linear-gradient(90deg,#e2edf7_0%,#e1ebf6_28%,#d6def2_36%,#d7def0_52%,#dce0ee_72%,#e1eaf5_80%,#dfebf6_100%)] text-[17px] text-[#1a1c20]">
      <div className="ml-8 h-[30px] w-[30px] rounded-full bg-[linear-gradient(155deg,#e9bd3a_5%,#f6971e_45%,#f0600c_95%)]" />
      <div className="ml-[14px] w-[246px] pb-[3px] leading-[24px] tracking-[-0.200px]"><div>98°F</div><div className="text-[#5b6068]">Sunny</div></div>
      <svg className="h-[35px] w-[35px]" viewBox="0 0 35 35"><defs><linearGradient id="win" x1="0" y1="0" x2="1" y2="1"><stop offset="0" stopColor="#45cffc" /><stop offset="1" stopColor="#0573d4" /></linearGradient></defs><path d="M1 0H17V17H0V1Q0 0 1 0ZM18 0H34Q35 0 35 1V17H18ZM0 18H17V35H1Q0 35 0 34ZM18 18H35V34Q35 35 34 35H18Z" fill="url(#win)" /></svg>
      <div className="mb-[2px] ml-[21px] flex h-[48px] w-[328px] items-center rounded-full border-2 border-b-[#b5bdcd] border-[#c6cede] bg-[#f3f6fc] pl-[15px] pr-[8px]">
        <svg className="h-[24px] w-[24px]" viewBox="0 0 24 24" fill="none" stroke="#25282c"><circle cx="10" cy="10" r="8" strokeWidth="2.500" /><path d="M15.500 16L21.500 22.500" strokeWidth="3" /></svg>
        <div className="ml-[14px] text-[19.500px] tracking-[-0.200px] text-[#5d6268]">Search</div>
        <div className="ml-auto"><Manatee /></div>
      </div>
      <div className="ml-[4px] flex h-[70px]">
        {TASKS.map((t, i) => (
          <div key={i} className="flex w-[66px] flex-col items-center pt-[6px]">
            <div className={t.active ? "flex h-[56px] w-[56px] items-start justify-center rounded-[6px] bg-[#edf0f8] pt-px shadow-[0_1px_2px_#b7bfd0]" : "flex h-[56px] w-[56px] items-start justify-center pt-px"}>
              {i === 6 || i === 8 ? t.el : <div className="mt-[9px]">{t.el}</div>}
            </div>
            {t.dot ? <div className="-mt-1 h-[5px] w-[9px] rounded-full bg-[#808389]" /> : null}
            {t.active ? <div className="-mt-1 h-[5px] w-6 rounded-full bg-[#0a78d4]" /> : null}
          </div>
        ))}
      </div>
      <svg className="ml-[35px] h-[26px] w-[117px]" viewBox="0 0 117 26" fill="none" stroke="#15171a">
        <path d="M1 16L8.500 8L16 16" strokeWidth="2" />
        <path d="M50 20.500Q44 19.500 44.500 14.500Q46 10 50 10Q55 1.500 63 7.500Q68 10.500 68 16.500Q67 20.500 63 20.500Z" fill="#eceaea" strokeWidth="1.500" /><path d="M47 13.500Q48 9.500 53 10.500L63 15.500Q55 16.500 50 19.500Q45 18.500 47 13.500Z" fill="#8f8f8f" stroke="none" /><path d="M51 9.500Q56 2.500 63 7.500Q67 11.500 63 15.500L55 10.500Z" fill="#b3b3b3" stroke="none" />
        <path d="M93 13A11.500 11.500 0 0 1 114 8M115 1.500V8.500H108M105 24Q96 24 94 17.500M94 24V18H101" strokeWidth="1.500" /><circle cx="110.500" cy="19" r="6" fill="#ff9800" stroke="none" />
      </svg>
      <div className="ml-[22px] w-[44px] pb-[2px] text-center leading-[23px] tracking-[-0.300px]"><div>ENG</div><div>UK</div></div>
      <svg className="ml-[22px] h-[24px] w-[98px]" viewBox="0 0 98 24" fill="none" stroke="#15171a" strokeWidth="1.700">
        <path d="M1.500 8.500Q13 -3 24.500 8.500M4.500 12Q13 3.500 21.500 12M8 15.500Q13 10.500 18 15.500" /><circle cx="13" cy="18.500" r="2" fill="#15171a" stroke="none" />
        <path d="M38 9H42L47 4V20L42 15.500H38Z" strokeLinejoin="round" /><path d="M50 9Q52.500 12 50 15.500M53.500 6Q58 12 53.500 19" /><path d="M57 4Q62.500 12 57 21" stroke="#b5bbc4" />
        <rect x="74" y="6" width="20" height="12.500" rx="3" strokeWidth="1.800" /><rect x="76.500" y="8.500" width="15" height="7.500" rx="1" fill="#15171a" stroke="none" /><path d="M95.500 10H97V14.500H95.500Z" fill="#15171a" /><path d="M78 0.500L72.500 7.500H76L74.500 13L80.500 5.500H77Z" fill="#15171a" strokeWidth="0.800" />
      </svg>
      <div className="ml-auto mr-[30px] pb-[3px] text-right leading-[24px] tracking-[0.080px]"><div className="tracking-[-0.100px]">15:34</div><div>21/04/2023</div></div>
    </div>
  );
}

export default function App() {
  return (
    <div className={`flex h-[1200px] w-[1920px] flex-col overflow-hidden bg-white ${UI}`}>
      <TabStrip />
      <Toolbar />
      <Bookmarks />
      <div className="h-[2px] shrink-0 bg-[linear-gradient(90deg,#f04b47,#f99a5f_50%,#fdfd7c)]" />
      <Page />
      <Taskbar />
    </div>
  );
}
